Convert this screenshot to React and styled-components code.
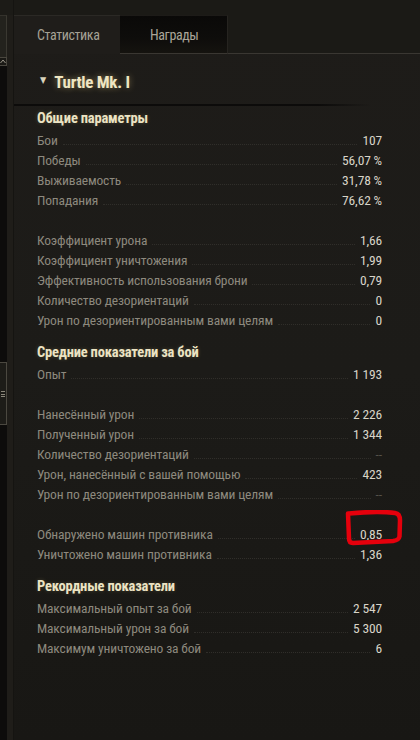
import React from "react";
import styled, { createGlobalStyle } from "styled-components";

const Global = createGlobalStyle`
  html, body { margin: 0; padding: 0; background: #141310; }
  body { font-family: Roboto, "DejaVu Sans Condensed", sans-serif; font-stretch: condensed; }
  * { box-sizing: border-box; }
`;

const Page = styled.div`
  display: flex;
  width: 420px;
  height: 740px;
  overflow: hidden;
  background: #1b1a16;
`;

const Rail = styled.div`
  display: flex;
  width: 14px;
  flex: none;
`;

const ScrollCol = styled.div`
  width: 7px;
  display: flex;
  flex-direction: column;
  background: #0d0c0b;
`;

const RailTop = styled.div`
  height: 15px;
  background: #1c1b17;
`;

const RailBox = styled.div`
  height: 42px;
  background: #23221d;
  border-top: 1px solid #34322c;
  border-right: 1px solid #3a3831;
`;

const ArrowBtn = styled.div`
  height: 9px;
  background: #1a1915;
  border: 1px solid #4a473f;
  border-left: none;
  display: flex;
  align-items: center;
  justify-content: center;
`;

const Track = styled.div`
  flex: 1;
  display: flex;
  flex-direction: column;
  padding-top: 296px;
`;

const Thumb = styled.div`
  height: 63px;
  background: #1d1c18;
  border: 1px solid #4b4840;
  border-left: none;
  display: flex;
  align-items: center;
  justify-content: center;
`;

const Grip = styled.div`
  width: 4px;
  height: 6px;
  border-top: 1px solid #8a867a;
  border-bottom: 1px solid #8a867a;
  position: relative;
  &::after {
    content: "";
    position: absolute;
    left: 0; right: 0; top: 2px;
    border-top: 1px solid #8a867a;
  }
`;

const EdgeStrip = styled.div`
  width: 7px;
  display: flex;
  flex-direction: column;
  background: #1f1d19;
  border-right: 1px solid #151411;
`;

const EdgeTop = styled.div`
  height: 15px;
  background: #1c1b17;
`;

const Panel = styled.div`
  flex: 1;
  display: flex;
  flex-direction: column;
  background: linear-gradient(180deg, #1e1c19 0%, #1c1b18 50%, #181714 100%);
`;

const TopSpace = styled.div`
  height: 15px;
  background: #1b1a16;
`;

const TabBar = styled.div`
  display: flex;
  height: 39px;
`;

const Tab = styled.div`
  width: ${(p) => p.$w}px;
  display: flex;
  align-items: center;
  padding-left: ${(p) => p.$pl}px;
  font-size: 14px;
  letter-spacing: -0.4px;
  color: ${(p) => (p.$active ? "#a6a296" : "#aaa599")};
  background: ${(p) =>
    p.$active
      ? "#1f1d1a"
      : "linear-gradient(180deg, #0a0908 0%, #0e0d0b 60%, #15130f 100%)"};
  border-top: 1px solid ${(p) => (p.$active ? "#2b2925" : "#1d1b18")};
  border-right: ${(p) => (p.$active ? "none" : "1px solid #262420")};
  border-bottom: ${(p) => (p.$active ? "none" : "1px solid #3a3732")};
`;

const TabFill = styled.div`
  flex: 1;
  border-bottom: 1px solid #3a3732;
  background: #1b1a16;
`;

const Content = styled.div`
  display: flex;
  flex-direction: column;
  padding: 0 38px 0 0;
`;

const TitleRow = styled.div`
  height: 52px;
  display: flex;
  align-items: center;
  gap: 8px;
  padding-left: 26px;
  padding-top: 3px;
  margin-right: -38px;
  background:
    linear-gradient(90deg, #0c0b0a 0%, #0c0b0a 85%, rgba(12,11,10,0) 100%) bottom left / 88% 2px no-repeat;
`;

const Caret = styled.span`
  font-size: 9px;
  color: #d9d3bd;
  line-height: 1;
  margin-top: -2px;
`;

const Title = styled.span`
  font-size: 17px;
  font-weight: bold;
  color: #efe6c2;
  text-shadow: 0 0 6px rgba(255, 228, 150, 0.45);
  letter-spacing: -0.3px;
`;

const Section = styled.div`
  display: flex;
  flex-direction: column;
  padding-left: 23px;
  margin-top: ${(p) => p.$mt || 0}px;
`;

const Heading = styled.div`
  height: 23px;
  display: flex;
  align-items: center;
  font-size: 14.5px;
  font-weight: bold;
  letter-spacing: -0.2px;
  color: #ebe3c3;
  text-shadow: 0 0 4px rgba(255, 228, 150, 0.2);
`;

const Row = styled.div`
  height: 20px;
  display: flex;
  align-items: center;
  font-size: 13.5px;
  letter-spacing: -0.15px;
`;

const Label = styled.span`
  color: #8d897e;
  white-space: nowrap;
`;

const Leader = styled.span`
  flex: 1;
  align-self: flex-end;
  margin: 0 5px 5px 5px;
  border-bottom: 1px dotted #302e2a;
`;

const Value = styled.span`
  position: relative;
  white-space: nowrap;
  color: ${(p) => (p.$dim ? "#55524b" : "#d8d4c8")};
`;

const Spacer = styled.div`
  height: 20px;
`;

const Mark = styled.svg`
  position: absolute;
  right: -22px;
  top: -16px;
  width: 60px;
  height: 38px;
  pointer-events: none;
`;

const groups = [
  {
    heading: "Общие параметры",
    mt: 0,
    rows: [
      ["Бои", "107"],
      ["Победы", "56,07 %"],
      ["Выживаемость", "31,78 %"],
      ["Попадания", "76,62 %"],
      null,
      ["Коэффициент урона", "1,66"],
      ["Коэффициент уничтожения", "1,99"],
      ["Эффективность использования брони", "0,79"],
      ["Количество дезориентаций", "0"],
      ["Урон по дезориентированным вами целям", "0"],
    ],
  },
  {
    heading: "Средние показатели за бой",
    mt: 11,
    rows: [
      ["Опыт", "1 193"],
      null,
      ["Нанесённый урон", "2 226"],
      ["Полученный урон", "1 344"],
      ["Количество дезориентаций", "--", true],
      ["Урон, нанесённый с вашей помощью", "423"],
      ["Урон по дезориентированным вами целям", "--", true],
      null,
      ["Обнаружено машин противника", "0,85", false, true],
      ["Уничтожено машин противника", "1,36"],
    ],
  },
  {
    heading: "Рекордные показатели",
    mt: 11,
    rows: [
      ["Максимальный опыт за бой", "2 547"],
      ["Максимальный урон за бой", "5 300"],
      ["Максимум уничтожено за бой", "6"],
    ],
  },
];

export default function App() {
  return (
    <>
      <Global />
      <Page>
        <Rail>
          <ScrollCol>
            <RailTop />
            <RailBox />
            <ArrowBtn>
              <svg width="6" height="5" viewBox="0 0 6 5">
                <path d="M0.5 4 L3 1 L5.5 4" fill="none" stroke="#9a968a" strokeWidth="1" />
              </svg>
            </ArrowBtn>
            <Track>
              <Thumb>
                <Grip />
              </Thumb>
            </Track>
          </ScrollCol>
          <EdgeStrip>
            <EdgeTop />
          </EdgeStrip>
        </Rail>
        <Panel>
          <TopSpace />
          <TabBar>
            <Tab $active $w={106} $pl={23}>Статистика</Tab>
            <Tab $w={108} $pl={30}>Награды</Tab>
            <TabFill />
          </TabBar>
          <Content>
            <TitleRow>
              <Caret>▼</Caret>
              <Title>Turtle Mk. I</Title>
            </TitleRow>
            {groups.map((g, gi) => (
              <Section key={gi} $mt={gi === 0 ? 1 : g.mt}>
                <Heading>{g.heading}</Heading>
                {g.rows.map((r, i) =>
                  r === null ? (
                    <Spacer key={i} />
                  ) : (
                    <Row key={i}>
                      <Label>{r[0]}</Label>
                      <Leader />
                      <Value $dim={r[2]}>
                        {r[1]}
                        {r[3] && (
                          <Mark viewBox="0 0 60 38">
                            <path
                              d="M5 3.5 C20 2 40 1.5 51 3 C55 3.5 56 6.5 56 10.5 L55.5 26.5 C55 29.5 53 30.5 49 31 L9 33 C6 33 5 31.5 5 28.5 L4 3.5"
                              fill="none"
                              stroke="#e5000c"
                              strokeWidth="4.5"
                              strokeLinecap="round"
                              strokeLinejoin="round"
                            />
                          </Mark>
                        )}
                      </Value>
                    </Row>
                  )
                )}
              </Section>
            ))}
          </Content>
        </Panel>
      </Page>
    </>
  );
}
